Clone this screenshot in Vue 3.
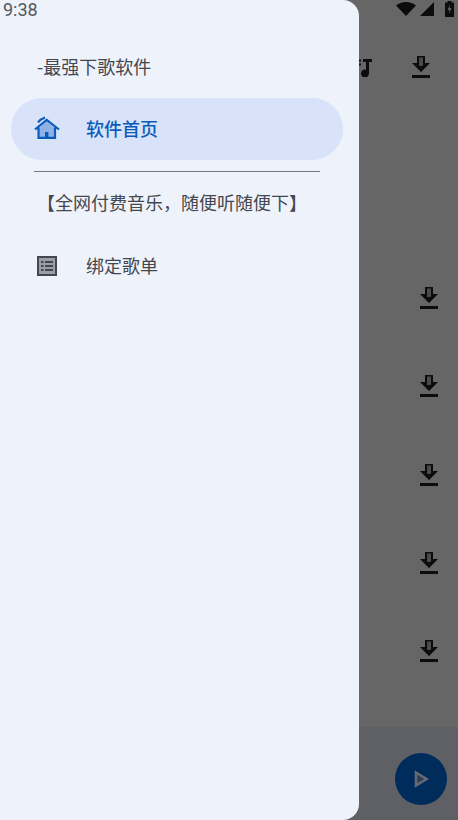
<template>
  <div class="screen">
    <!-- page behind the drawer -->
    <div class="page">
      <div class="status-icons">
        <svg class="wifi" width="20" height="14" viewBox="0 0 20 14"><path d="M0 3.500C2.700 1.200 6.200 0 10 0s7.300 1.200 10 3.500L10 14z" fill="#0c0c0c" /></svg>
        <svg class="signal" width="14" height="14" viewBox="0 0 14 14"><path d="M14 0v14H0z" fill="#0c0c0c" /></svg>
        <svg width="9" height="16" viewBox="0 0 9 16">
          <path d="M2.500 0h4v1.500H9V16H0V1.500h2.500z" fill="#0c0c0c" />
          <path d="M5.200 3.500 2.500 9h2L3.800 13l2.800-5.700h-2z" fill="#666" />
        </svg>
      </div>
      <div class="toolbar">
        <svg class="note" width="20" height="20" viewBox="0 0 20 20">
          <path d="M1 2.500h8v2H1zM1 6.500h8v2H1zM1 10.500h5v2H1z" fill="#0c0c0c" />
          <path d="M11 2h9v3h-3v11.500a4 4 0 1 1-3-3.900V5h-3z" fill="#0c0c0c" />
        </svg>
        <svg class="dl" width="24" height="24" viewBox="0 0 24 24">
          <path d="M8 2h8v7h5l-9 9-9-9h5zM3 21h18v3H3z" fill="#0c0c0c" />
          <path d="M10 3.500h4v8.500h-4z" fill="#4a4a4a" />
        </svg>
      </div>
      <div class="list">
        <div v-for="n in 5" :key="n" class="row">
          <svg width="24" height="24" viewBox="0 0 24 24">
            <path d="M8 2h8v7h5l-9 9-9-9h5zM3 21h18v3H3z" fill="#0c0c0c" />
            <path d="M10 3.500h4v8.500h-4z" fill="#4a4a4a" />
          </svg>
        </div>
      </div>
      <div class="player">
        <button class="play">
          <svg width="16" height="18" viewBox="0 0 16 18"><path d="M3 2.500 13.500 9 3 15.500z" fill="#2a3f5c" stroke="#666b73" stroke-width="2.600" /></svg>
        </button>
      </div>
    </div>

    <!-- navigation drawer -->
    <aside class="drawer">
      <div class="time">9:38</div>
      <div class="tagline">-最强下歌软件</div>
      <div class="item active">
        <svg class="item-icon" width="26" height="26" viewBox="0 0 26 26">
          <path d="M4.500 12.500 12.700 5l8.300 7.500V22H4.500z" fill="#8fb1e6" />
          <path d="M1 13.500 12.700 4l12.300 9.500M4.500 11.500V21.800h16.500V11.500" fill="none" stroke="#0b5cba" stroke-width="2.200" />
          <path d="M11 16h3.400v6H11z" fill="#0b5cba" />
          <path d="M4 6.500C5.500 4.200 8 2.500 11 1.500" fill="none" stroke="#0b5cba" stroke-width="2" />
        </svg>
        <span>软件首页</span>
      </div>
      <div class="divider"></div>
      <div class="notice">【全网付费音乐，随便听随便下】</div>
      <div class="item">
        <svg class="item-icon list-icon" width="20" height="20" viewBox="0 0 20 20">
          <rect x="1" y="1" width="18" height="18" fill="#9a9da6" stroke="#44474e" stroke-width="2" />
          <path d="M4 5h2.500v2H4zM8 5h8v2H8zM4 9h2.500v2H4zM8 9h8v2H8zM4 13h2.500v2H4zM8 13h8v2H8z" fill="#44474e" />
        </svg>
        <span>绑定歌单</span>
      </div>
    </aside>
  </div>
</template>

<script setup>
</script>

<style>
html, body {
  margin: 0;
  background: #666;
}
</style>

<style scoped>
.screen {
  position: relative;
  width: 458px;
  height: 820px;
  overflow: hidden;
  font-family: "Noto Sans CJK SC", "Noto Sans", sans-serif;
}

.page {
  height: 820px;
  display: flex;
  flex-direction: column;
  background: #666;
}

.status-icons {
  height: 20px;
  display: flex;
  justify-content: flex-end;
  align-items: flex-start;
  padding: 1px 4px 0 0;
  box-sizing: border-box;
}

.wifi,
.signal {
  margin-top: 1px;
}

.wifi {
  margin-right: 4px;
}

.signal {
  margin-right: 11px;
}

.toolbar {
  height: 92px;
  display: flex;
  justify-content: flex-end;
  align-items: flex-start;
  padding: 34px 25px 0 0;
  box-sizing: border-box;
}

.note {
  margin: 3px 37px 0 0;
}

.list {
  flex: 1;
  padding-top: 173px;
}

.row {
  height: 88.250px;
  display: flex;
  justify-content: flex-end;
  padding-right: 17px;
}

.player {
  height: 93px;
  background: #5f6066;
  display: flex;
  justify-content: flex-end;
  padding: 26px 11px 0 0;
  box-sizing: border-box;
}

.play {
  width: 52px;
  height: 52px;
  border: 0;
  padding: 0;
  border-radius: 50%;
  background: #002c5c;
  display: flex;
  align-items: center;
  justify-content: center;
}

.drawer {
  position: absolute;
  left: 0;
  top: 0;
  bottom: 0;
  width: 359px;
  background: #eef2fb;
  border-radius: 0 16px 16px 0;
  color: #44474e;
  font-size: 18px;
  line-height: 26px;
}

.time {
  height: 20px;
  line-height: 20px;
  padding-left: 3px;
  font-family: Roboto, sans-serif;
  font-size: 18px;
  color: #55575e;
}

.tagline {
  padding: 33px 0 0 37px;
  height: 78px;
  box-sizing: border-box;
}

.item {
  height: 62px;
  margin: 0 16px 0 11px;
  display: flex;
  align-items: center;
  border-radius: 31px;
}

.item span {
  margin-bottom: 2px;
}

.item.active {
  background: #d8e2f9;
  color: #0b5cba;
  font-weight: 500;
}

.item-icon {
  width: 26px;
  margin-left: 23px;
  margin-right: 26px;
}

.list-icon {
  width: 20px;
  margin-left: 26px;
  margin-right: 29px;
}

.divider {
  height: 1px;
  margin: 11px 39px 0 34px;
  background: #74777f;
}

.notice {
  padding: 17px 0 0 37px;
  height: 63px;
  box-sizing: border-box;
}
</style>
